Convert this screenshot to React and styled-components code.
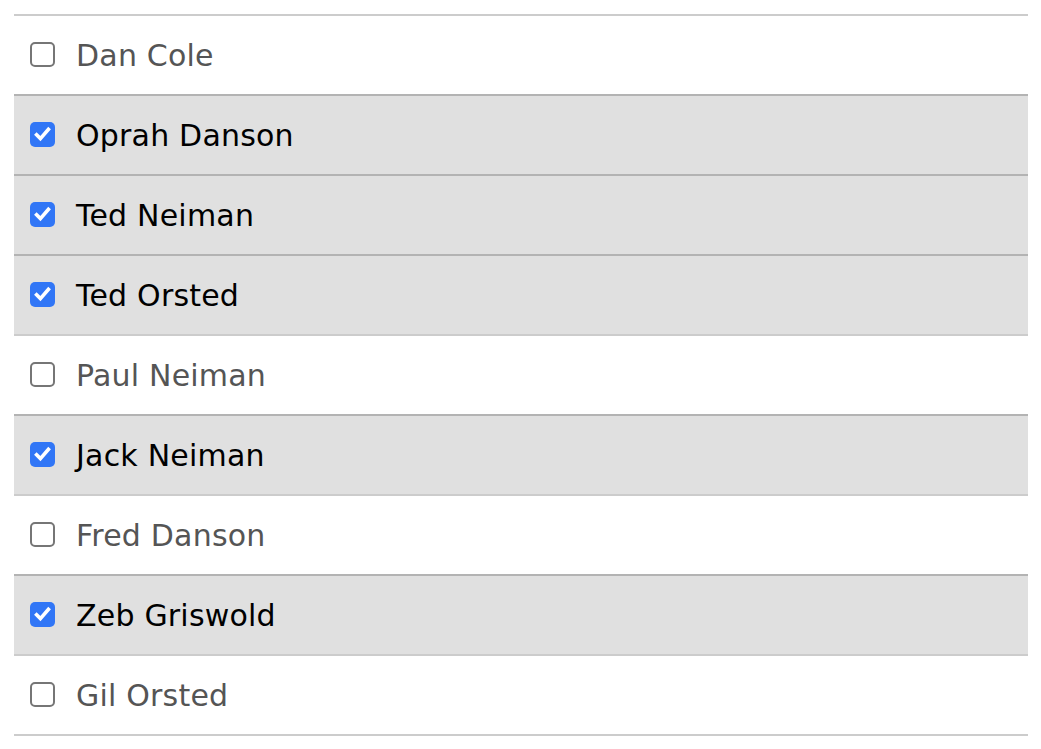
import React, { useState } from 'react'
import styled, { createGlobalStyle } from 'styled-components'

const GlobalStyle = createGlobalStyle`
  body {
    margin: 0;
    background: #fff;
    font-family: "DejaVu Sans", Verdana, sans-serif;
  }
`

const people = [
  { name: 'Dan Cole', checked: false },
  { name: 'Oprah Danson', checked: true },
  { name: 'Ted Neiman', checked: true },
  { name: 'Ted Orsted', checked: true },
  { name: 'Paul Neiman', checked: false },
  { name: 'Jack Neiman', checked: true },
  { name: 'Fred Danson', checked: false },
  { name: 'Zeb Griswold', checked: true },
  { name: 'Gil Orsted', checked: false }
]

export default function App () {
  const [list, setList] = useState(people)

  const toggle = (i) => {
    setList(list.map((p, j) => (j === i ? { ...p, checked: !p.checked } : p)))
  }

  return (
    <Page>
      <GlobalStyle />
      <List>
        {list.map((p, i) => (
          <Row key={p.name} $checked={p.checked} onClick={() => toggle(i)}>
            <Box $checked={p.checked}>
              {p.checked && (
                <svg width='19' height='19' viewBox='0 0 19 19'>
                  <path d='M3.6 9.8l3.8 3.8 8-9.2' fill='none' stroke='#fff' strokeWidth='3.6' strokeLinecap='square' />
                </svg>
              )}
            </Box>
            <Name $checked={p.checked}>{p.name}</Name>
          </Row>
        ))}
      </List>
    </Page>
  )
}

const Page = styled.div`
  padding: 14px 13px 0 14px;
`

const List = styled.div`
  display: flex;
  flex-direction: column;
  border-bottom: 2px solid rgba(0, 0, 0, 0.2);
`

const Row = styled.div`
  display: flex;
  align-items: center;
  gap: 21px;
  height: 78px;
  padding: 0 16px;
  border-top: 2px solid rgba(0, 0, 0, 0.2);
  background: ${p => (p.$checked ? '#e0e0e0' : '#fff')};
  cursor: pointer;
  user-select: none;
`

const Box = styled.span`
  box-sizing: border-box;
  display: flex;
  align-items: center;
  justify-content: center;
  width: 25px;
  height: 25px;
  margin-top: -2px;
  border-radius: 5px;
  border: ${p => (p.$checked ? 'none' : '2px solid #767676')};
  background: ${p => (p.$checked ? '#3176f6' : '#fff')};
`

const Name = styled.span`
  font-size: 30px;
  line-height: 1;
  margin-top: 2px;
  letter-spacing: 0.2px;
  color: ${p => (p.$checked ? '#000' : '#555')};
`
